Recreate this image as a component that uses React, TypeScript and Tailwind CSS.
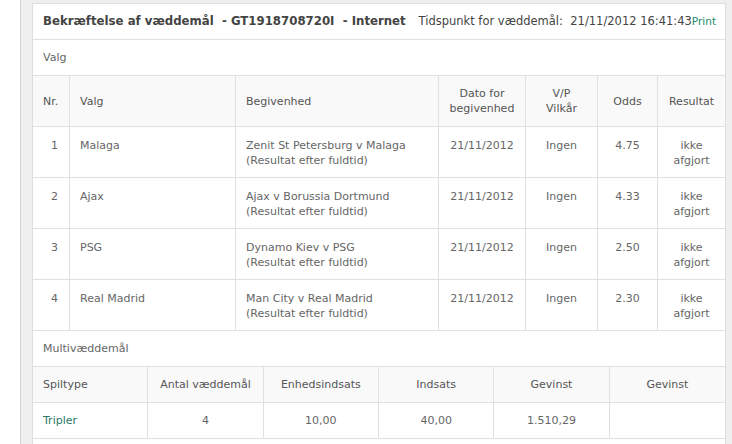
import React from 'react'

const selections = [
  { nr: 1, valg: 'Malaga', event: 'Zenit St Petersburg v Malaga', odds: '4.75' },
  { nr: 2, valg: 'Ajax', event: 'Ajax v Borussia Dortmund', odds: '4.33' },
  { nr: 3, valg: 'PSG', event: 'Dynamo Kiev v PSG', odds: '2.50' },
  { nr: 4, valg: 'Real Madrid', event: 'Man City v Real Madrid', odds: '2.30' },
]

const cols = 'grid grid-cols-[37px_166px_203px_87px_72px_60px_67px]'

const App = () => {
  return (
    <div className="flex w-[732px] h-[444px] overflow-hidden bg-white font-['DejaVu_Sans',Verdana,sans-serif] text-[11px] leading-[15px] text-[#666]">
      <div className="w-[21px] shrink-0 bg-white border-r border-[#d4d4d4]"></div>
      <div className="flex-1 bg-[#efefef] pl-[11px] pr-[6px] pt-[3px]">
        <div className="w-[694px] bg-white border border-[#dedede]">
          <div className="flex items-center justify-between h-[36px] pl-[10px] pr-[9px] border-b border-[#e0e0e0] whitespace-nowrap">
            <h2 className="font-bold text-[11.75px] text-[#444]">
              Bekræftelse af væddemål{'\u00a0\u00a0'}- GT1918708720I{'\u00a0\u00a0'}- Internet
            </h2>
            <div className="flex items-baseline text-[11.5px] text-[#444]">
              <span>Tidspunkt for væddemål:{'\u00a0\u00a0'}21/11/2012 16:41:43</span>
              <a className="text-[10.5px] text-[#1b8a6b]">Print</a>
            </div>
          </div>

          <div className="flex items-center h-[36px] pl-[10px] border-b border-[#e0e0e0]">Valg</div>

          <div className={`${cols} h-[51px] bg-[#f9f9f9] border-b border-[#e0e0e0] text-[#555]`}>
            <div className="flex items-center pl-[10px] border-r border-[#e0e0e0]">Nr.</div>
            <div className="flex items-center pl-[10px] border-r border-[#e0e0e0]">Valg</div>
            <div className="flex items-center pl-[10px] border-r border-[#e0e0e0]">Begivenhed</div>
            <div className="flex items-center justify-center text-center border-r border-[#e0e0e0]">Dato for<br />begivenhed</div>
            <div className="flex items-center justify-center text-center border-r border-[#e0e0e0]">V/P<br />Vilkår</div>
            <div className="flex items-center justify-center border-r border-[#e0e0e0]">Odds</div>
            <div className="flex items-center justify-center">Resultat</div>
          </div>

          {selections.map((s) => (
            <div key={s.nr} className={`${cols} h-[51px] border-b border-[#e0e0e0]`}>
              <div className="pt-[11px] pr-[11px] text-right border-r border-[#e0e0e0]">{s.nr}</div>
              <div className="pt-[11px] pl-[10px] border-r border-[#e0e0e0]">{s.valg}</div>
              <div className="pt-[11px] pl-[10px] border-r border-[#e0e0e0]">
                {s.event}
                <br />
                (Resultat efter fuldtid)
              </div>
              <div className="pt-[11px] text-center border-r border-[#e0e0e0]">21/11/2012</div>
              <div className="pt-[11px] text-center border-r border-[#e0e0e0]">Ingen</div>
              <div className="pt-[11px] text-center border-r border-[#e0e0e0]">{s.odds}</div>
              <div className="pt-[11px] text-center">ikke<br />afgjort</div>
            </div>
          ))}

          <div>
            <div className="flex items-center h-[36px] pl-[10px] border-b border-[#e0e0e0]">Multivæddemål</div>
            <div className="grid grid-cols-6 h-[36px] bg-[#f9f9f9] border-b border-[#e0e0e0] text-[#555]">
              <div className="flex items-center pl-[10px] border-r border-[#e0e0e0]">Spiltype</div>
              <div className="flex items-center justify-center border-r border-[#e0e0e0]">Antal væddemål</div>
              <div className="flex items-center justify-center border-r border-[#e0e0e0]">Enhedsindsats</div>
              <div className="flex items-center justify-center border-r border-[#e0e0e0]">Indsats</div>
              <div className="flex items-center justify-center border-r border-[#e0e0e0]">Gevinst</div>
              <div className="flex items-center justify-center">Gevinst</div>
            </div>
            <div className="grid grid-cols-6 h-[36px] border-b border-[#e0e0e0]">
              <div className="flex items-center pl-[10px] text-[#2a7a66] border-r border-[#e0e0e0]">Tripler</div>
              <div className="flex items-center justify-center border-r border-[#e0e0e0]">4</div>
              <div className="flex items-center justify-center border-r border-[#e0e0e0]">10,00</div>
              <div className="flex items-center justify-center border-r border-[#e0e0e0]">40,00</div>
              <div className="flex items-center justify-center border-r border-[#e0e0e0]">1.510,29</div>
              <div className="flex items-center justify-center"></div>
            </div>
            <div className="h-[36px]"></div>
          </div>
        </div>
      </div>
    </div>
  )
}

export default App
